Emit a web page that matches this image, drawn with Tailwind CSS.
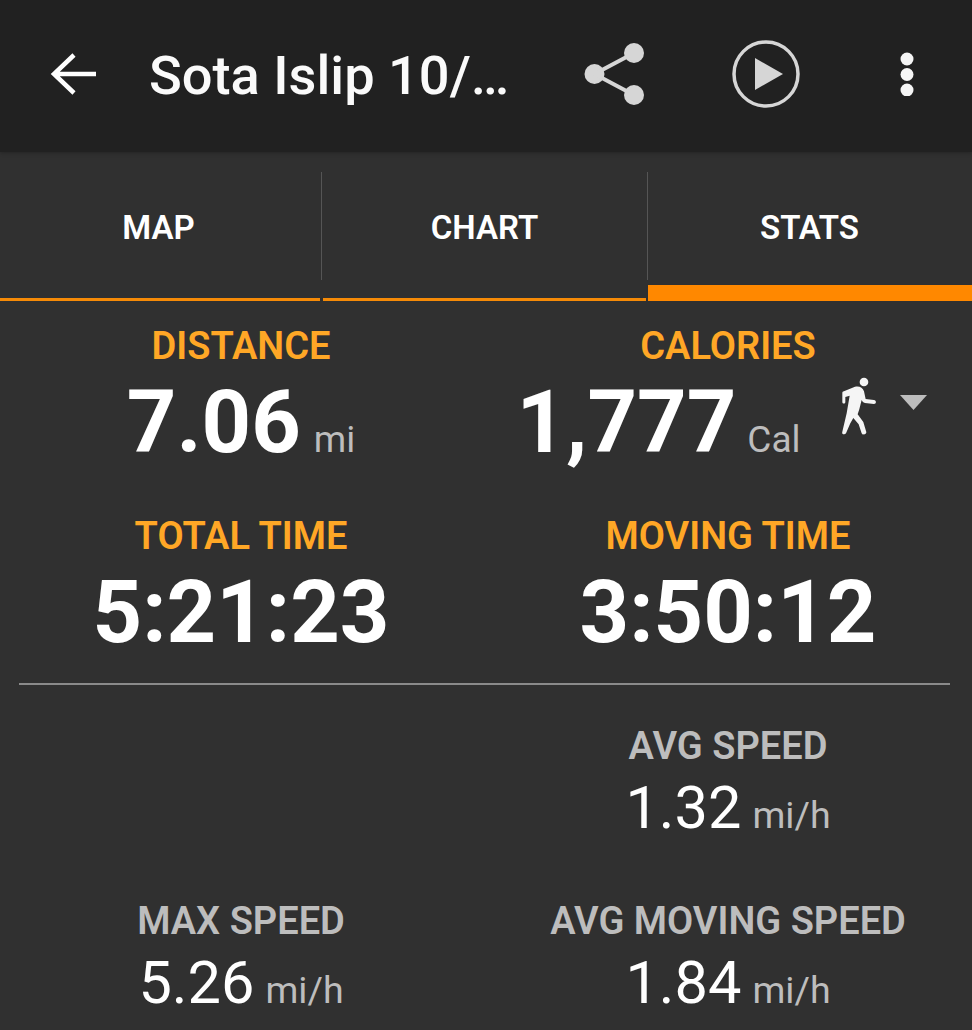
<!DOCTYPE html>
<html>
<head>
<meta charset="utf-8">
<script src="https://cdn.jsdelivr.net/npm/@tailwindcss/browser@4"></script>
</head>
<body class="m-0">
<div class="w-[972px] h-[1030px] overflow-hidden bg-[#303030] font-['Roboto',sans-serif] text-white">
  <header class="h-[152px] bg-[#212121] flex items-center relative z-10 shadow-[0_1px_4px_rgba(0,0,0,0.25)]">
    <svg class="absolute left-[50px] top-[52px]" width="48" height="44" viewBox="0 0 48 44" fill="none" stroke="#fff" stroke-width="4.500"><path d="M46 22H5M24 3 4 22l20 19"/></svg>
    <div class="absolute left-[149px] top-[44px] text-[54.200px] leading-[64px] font-medium whitespace-nowrap text-[#fafafa]">Sota Islip 10/…</div>
    <svg class="absolute left-[584px] top-[42px]" width="62" height="64" viewBox="0 0 62 64" fill="#d6d6d6" stroke="none"><circle cx="50" cy="11" r="10"/><circle cx="10.500" cy="32" r="10"/><circle cx="50" cy="53" r="10"/><path d="M10.500 32 50 11M10.500 32 50 53" stroke="#d6d6d6" stroke-width="4"/></svg>
    <svg class="absolute left-[731px] top-[39px]" width="70" height="70" viewBox="0 0 70 70"><circle cx="35" cy="35" r="32" fill="none" stroke="#d6d6d6" stroke-width="3.500"/><path d="M24 19v32l28-16z" fill="#d6d6d6"/></svg>
    <svg class="absolute left-[899px] top-[52px]" width="16" height="44" viewBox="0 0 16 44" fill="#f5f5f5"><circle cx="8" cy="7" r="6.500"/><circle cx="8" cy="22.500" r="6.500"/><circle cx="8" cy="38" r="6.500"/></svg>
  </header>
  <nav class="h-[150px] flex relative">
    <div class="w-[317px] flex justify-center"><span class="mt-[56px] text-[33px] leading-[39px] font-semibold">MAP</span></div>
    <div class="w-[335px] flex justify-center"><span class="mt-[56px] text-[33px] leading-[39px] font-semibold">CHART</span></div>
    <div class="flex-1 flex justify-center pr-[5px]"><span class="mt-[56px] text-[33px] leading-[39px] font-semibold">STATS</span></div>
    <div class="absolute left-[321px] top-[20px] w-px h-[108px] bg-[#555]"></div>
    <div class="absolute left-[647px] top-[20px] w-px h-[108px] bg-[#555]"></div>
    <div class="absolute left-0 top-[146px] w-[320px] h-[3px] bg-[#f58a07]"></div>
    <div class="absolute left-[323px] top-[146px] w-[323px] h-[3px] bg-[#f58a07]"></div>
    <div class="absolute left-[648px] top-[133px] w-[324px] h-[16px] bg-[#ff8800]"></div>
  </nav>
  <section class="flex mt-[23px]">
    <div class="w-[482px] flex flex-col items-center">
      <div class="text-[38px] leading-[42px] font-semibold text-[#ffa726]">DISTANCE</div>
      <div class="flex items-baseline justify-center h-[100px] mt-[6px]"><span class="text-[86.500px] leading-[100px] font-bold">7.06</span><span class="text-[37px] ml-[13px] text-[#bdbdbd]">mi</span></div>
    </div>
    <div class="flex-1 flex flex-col items-center relative pl-[2px]">
      <div class="text-[38px] leading-[42px] font-semibold text-[#ffa726]">CALORIES</div>
      <div class="flex items-baseline justify-center h-[100px] mt-[6px] mr-[139px]"><span class="text-[86.500px] leading-[100px] font-bold">1,777</span><span class="text-[37px] ml-[11px] text-[#bdbdbd]">Cal</span></div>
      <svg class="absolute left-[358px] top-[51px]" width="38.300" height="60" viewBox="120 50 115 180" fill="#f5f5f5"><circle cx="192" cy="68" r="13"/><path d="M128 97 165 82C178 79 188 84 192 96L197 119 222 122C230 123 230 134 222 134L195 131C190 130 187 127 185 122L178 150 173 165 190 188 199 218C200 226 188 228 185 222L176 195 160 176 151 192 138 222C134 228 124 225 127 217L140 162 149 109 136 113 136 128C136 134 127 134 127 128V102C127 100 127 98 128 97Z"/></svg>
      <svg class="absolute left-[418px] top-[70px]" width="27" height="15" viewBox="0 0 27 15" fill="#bdbdbd"><path d="M0 0h27L13.500 15z"/></svg>
    </div>
  </section>
  <section class="flex mt-[42px]">
    <div class="w-[482px] flex flex-col items-center">
      <div class="text-[38px] leading-[42px] font-semibold text-[#ffa726]">TOTAL TIME</div>
      <div class="text-[86.500px] leading-[100px] font-bold mt-[6px]">5:21:23</div>
    </div>
    <div class="flex-1 flex flex-col items-center pl-[2px]">
      <div class="text-[38px] leading-[42px] font-semibold text-[#ffa726]">MOVING TIME</div>
      <div class="text-[86.500px] leading-[100px] font-bold mt-[6px]">3:50:12</div>
    </div>
  </section>
  <div class="ml-[19px] mr-[22px] h-[2px] bg-[#8a8a8a] mt-[20px]"></div>
  <section class="flex mt-[40px]">
    <div class="w-[482px]"></div>
    <div class="flex-1 flex flex-col items-center pl-[2px]">
      <div class="text-[38px] leading-[42px] font-semibold text-[#bdbdbd]">AVG SPEED</div>
      <div class="flex items-baseline mt-[5px]"><span class="text-[59.500px] leading-[72px]">1.32</span><span class="text-[37.500px] ml-[11px] text-[#bdbdbd]">mi/h</span></div>
    </div>
  </section>
  <section class="flex mt-[56px]">
    <div class="w-[482px] flex flex-col items-center">
      <div class="text-[38px] leading-[42px] font-semibold text-[#bdbdbd]">MAX SPEED</div>
      <div class="flex items-baseline mt-[5px]"><span class="text-[59.500px] leading-[72px]">5.26</span><span class="text-[37.500px] ml-[11px] text-[#bdbdbd]">mi/h</span></div>
    </div>
    <div class="flex-1 flex flex-col items-center pl-[2px]">
      <div class="text-[38px] leading-[42px] font-semibold text-[#bdbdbd]">AVG MOVING SPEED</div>
      <div class="flex items-baseline mt-[5px]"><span class="text-[59.500px] leading-[72px]">1.84</span><span class="text-[37.500px] ml-[11px] text-[#bdbdbd]">mi/h</span></div>
    </div>
  </section>
</div>
</body>
</html>
